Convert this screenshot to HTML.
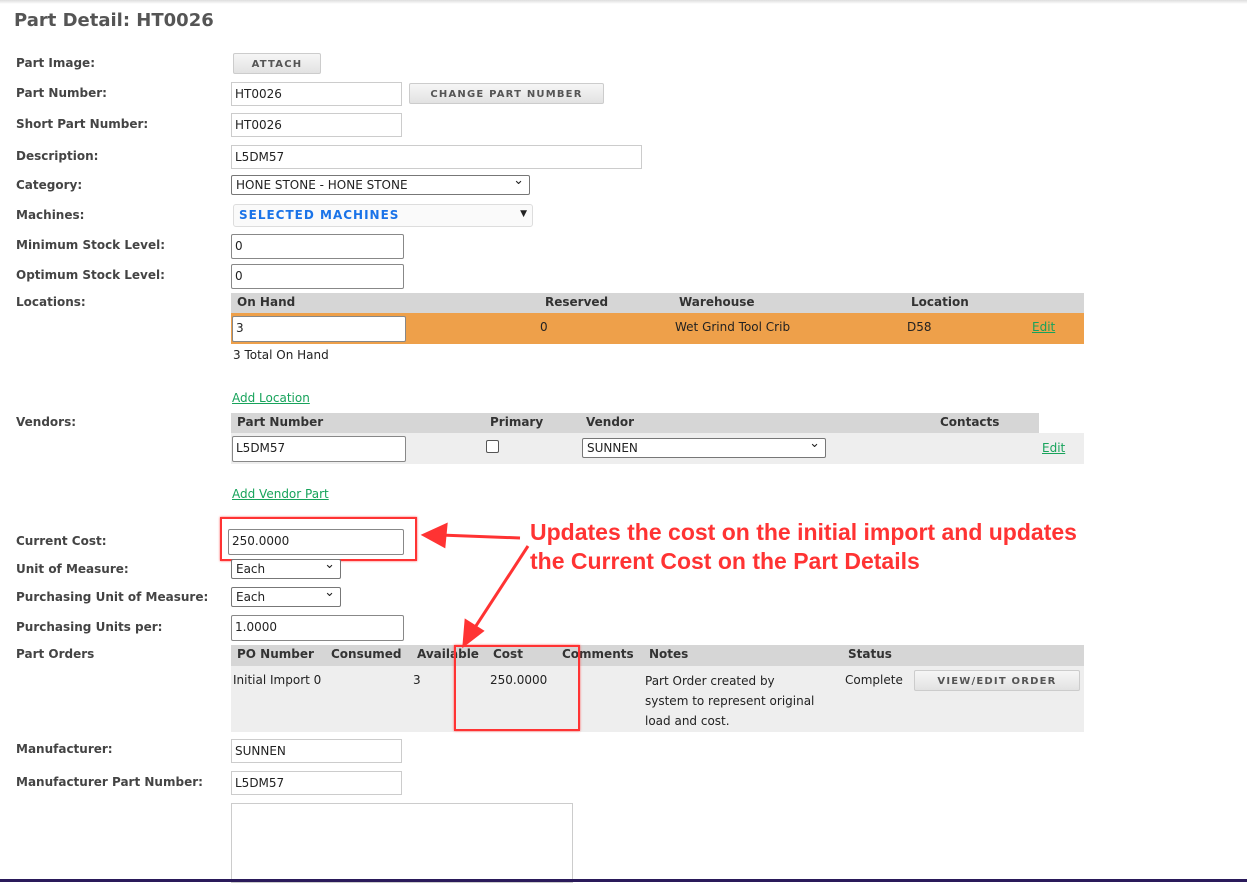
<!DOCTYPE html>
<html><head><style>
body{margin:0;width:1247px;height:882px;background:#fff;position:relative;overflow:hidden;font-family:"DejaVu Sans","Liberation Sans",sans-serif;font-size:12px;color:#222}
.a{position:absolute;white-space:nowrap}
.l{font-weight:bold;color:#444;font-size:12px}
.in{position:absolute;border:1px solid #ccc;background:#fff;box-sizing:border-box;padding:3px 3px;font-size:12px;height:24px;line-height:16px}
.in2{border:1px solid #888;border-radius:2px}
.btn{position:absolute;background:linear-gradient(#f6f6f6,#e2e2e2);border:1px solid #ccc;border-radius:2px;box-sizing:border-box;font-size:10px;font-weight:bold;letter-spacing:1.2px;color:#555;text-align:center}
.sel{position:absolute;border:1px solid #777;border-radius:2px;box-sizing:border-box;background:#fff;font-size:12px;padding:1px 4px;line-height:17px}
.sel:after{content:"⌄";position:absolute;right:5px;top:-4px;font-size:13px}
.hd{position:absolute;background:#d6d6d6;font-weight:bold;color:#333;font-size:12px}
a{color:#17a35b;text-decoration:underline}
.red{position:absolute;border:2px solid #f33;box-shadow:0 0 2px #f55}
</style></head><body>
<div class="a" style="left:0;top:0;width:1247px;height:4px;background:linear-gradient(#ddd,#fff)"></div>
<div class="a" style="left:14px;top:10px;font-size:18px;font-weight:bold;color:#555">Part Detail: HT0026</div>

<div class="a l" style="left:16px;top:56px">Part Image:</div>
<div class="btn" style="left:233px;top:53px;width:88px;height:21px;line-height:21px">ATTACH</div>
<div class="a l" style="left:16px;top:86px">Part Number:</div>
<div class="in" style="left:231px;top:82px;width:171px">HT0026</div>
<div class="btn" style="left:409px;top:83px;width:195px;height:21px;line-height:21px">CHANGE PART NUMBER</div>
<div class="a l" style="left:16px;top:117px">Short Part Number:</div>
<div class="in" style="left:231px;top:113px;width:171px">HT0026</div>
<div class="a l" style="left:16px;top:149px">Description:</div>
<div class="in" style="left:231px;top:145px;width:411px">L5DM57</div>
<div class="a l" style="left:16px;top:178px">Category:</div>
<div class="sel" style="left:231px;top:175px;width:299px;height:20px">HONE STONE - HONE STONE</div>
<div class="a l" style="left:16px;top:208px">Machines:</div>
<div class="a" style="left:233px;top:204px;width:300px;height:23px;border:1px solid #ddd;border-radius:3px;box-sizing:border-box;background:#fafafa"><span style="position:absolute;left:5px;top:3px;color:#1a73e8;font-weight:bold;letter-spacing:1px">SELECTED MACHINES</span><span style="position:absolute;right:5px;top:4px;font-size:9px">▼</span></div>
<div class="a l" style="left:16px;top:238px">Minimum Stock Level:</div>
<div class="in in2" style="left:231px;top:234px;width:173px;height:25px">0</div>
<div class="a l" style="left:16px;top:268px">Optimum Stock Level:</div>
<div class="in in2" style="left:231px;top:264px;width:173px;height:25px">0</div>

<div class="a l" style="left:16px;top:295px">Locations:</div>
<div class="hd" style="left:231px;top:293px;width:853px;height:20px"><span class="a" style="left:6px;top:2px">On Hand</span><span class="a" style="left:314px;top:2px">Reserved</span><span class="a" style="left:448px;top:2px">Warehouse</span><span class="a" style="left:680px;top:2px">Location</span></div>
<div class="a" style="left:231px;top:313px;width:853px;height:31px;background:#eea04a"></div>
<div class="in in2" style="left:232px;top:316px;width:174px;height:26px">3</div>
<div class="a" style="left:540px;top:320px">0</div>
<div class="a" style="left:675px;top:320px">Wet Grind Tool Crib</div>
<div class="a" style="left:907px;top:320px">D58</div>
<a class="a" style="left:1032px;top:320px">Edit</a>
<div class="a" style="left:233px;top:348px">3 Total On Hand</div>
<a class="a" style="left:232px;top:391px">Add Location</a>

<div class="a l" style="left:16px;top:415px">Vendors:</div>
<div class="hd" style="left:231px;top:413px;width:808px;height:20px"><span class="a" style="left:6px;top:2px">Part Number</span><span class="a" style="left:259px;top:2px">Primary</span><span class="a" style="left:355px;top:2px">Vendor</span><span class="a" style="left:709px;top:2px">Contacts</span></div>
<div class="a" style="left:231px;top:433px;width:853px;height:31px;background:#eee"></div>
<div class="in in2" style="left:232px;top:436px;width:174px;height:26px">L5DM57</div>
<div class="a" style="left:486px;top:440px;width:11px;height:11px;border:1px solid #555;border-radius:2px;background:#fff"></div>
<div class="sel" style="left:582px;top:438px;width:244px;height:20px">SUNNEN</div>
<a class="a" style="left:1042px;top:441px">Edit</a>
<a class="a" style="left:232px;top:487px">Add Vendor Part</a>

<div class="a l" style="left:16px;top:534px">Current Cost:</div>
<div class="in in2" style="left:228px;top:529px;width:176px;height:26px">250.0000</div>
<div class="red" style="left:220px;top:517px;width:193px;height:40px"></div>
<div class="a l" style="left:16px;top:562px">Unit of Measure:</div>
<div class="sel" style="left:231px;top:559px;width:110px;height:20px">Each</div>
<div class="a l" style="left:16px;top:590px">Purchasing Unit of Measure:</div>
<div class="sel" style="left:231px;top:587px;width:110px;height:20px">Each</div>
<div class="a l" style="left:16px;top:620px">Purchasing Units per:</div>
<div class="in in2" style="left:231px;top:615px;width:173px;height:26px">1.0000</div>

<div class="a l" style="left:16px;top:647px">Part Orders</div>
<div class="hd" style="left:231px;top:645px;width:853px;height:21px"><span class="a" style="left:6px;top:2px">PO Number</span><span class="a" style="left:100px;top:2px">Consumed</span><span class="a" style="left:186px;top:2px">Available</span><span class="a" style="left:262px;top:2px">Cost</span><span class="a" style="left:331px;top:2px">Comments</span><span class="a" style="left:418px;top:2px">Notes</span><span class="a" style="left:617px;top:2px">Status</span></div>
<div class="a" style="left:231px;top:666px;width:853px;height:66px;background:#eee"></div>
<div class="a" style="left:233px;top:673px">Initial Import 0</div>
<div class="a" style="left:413px;top:673px">3</div>
<div class="a" style="left:490px;top:673px">250.0000</div>
<div class="a" style="left:645px;top:671px;line-height:20px">Part Order created by<br>system to represent original<br>load and cost.</div>
<div class="a" style="left:845px;top:673px">Complete</div>
<div class="btn" style="left:914px;top:670px;width:166px;height:21px;line-height:21px">VIEW/EDIT ORDER</div>
<div class="red" style="left:454px;top:645px;width:122px;height:82px"></div>

<div class="a l" style="left:16px;top:742px">Manufacturer:</div>
<div class="in" style="left:231px;top:739px;width:171px">SUNNEN</div>
<div class="a l" style="left:16px;top:775px">Manufacturer Part Number:</div>
<div class="in" style="left:231px;top:771px;width:171px">L5DM57</div>
<div class="a" style="left:231px;top:803px;width:342px;height:80px;border:1px solid #ccc;box-sizing:border-box"></div>
<div class="a" style="left:0;top:879px;width:1247px;height:3px;background:#2a1a5a"></div>

<div class="a" style="left:530px;top:518px;font-family:'Liberation Sans',sans-serif;font-size:23px;font-weight:bold;color:#f33;line-height:29px">Updates the cost on the initial import and updates<br>the Current Cost on the Part Details</div>
<svg class="a" style="left:0;top:0" width="1247" height="882"><g stroke="#f33" stroke-width="3" fill="#f33"><line x1="520" y1="538" x2="440" y2="535"/><polygon points="424,535 446,525 444,546"/><line x1="528" y1="546" x2="472" y2="632"/><polygon points="464,645 466,621 482,631"/></g></svg>
</body></html>
